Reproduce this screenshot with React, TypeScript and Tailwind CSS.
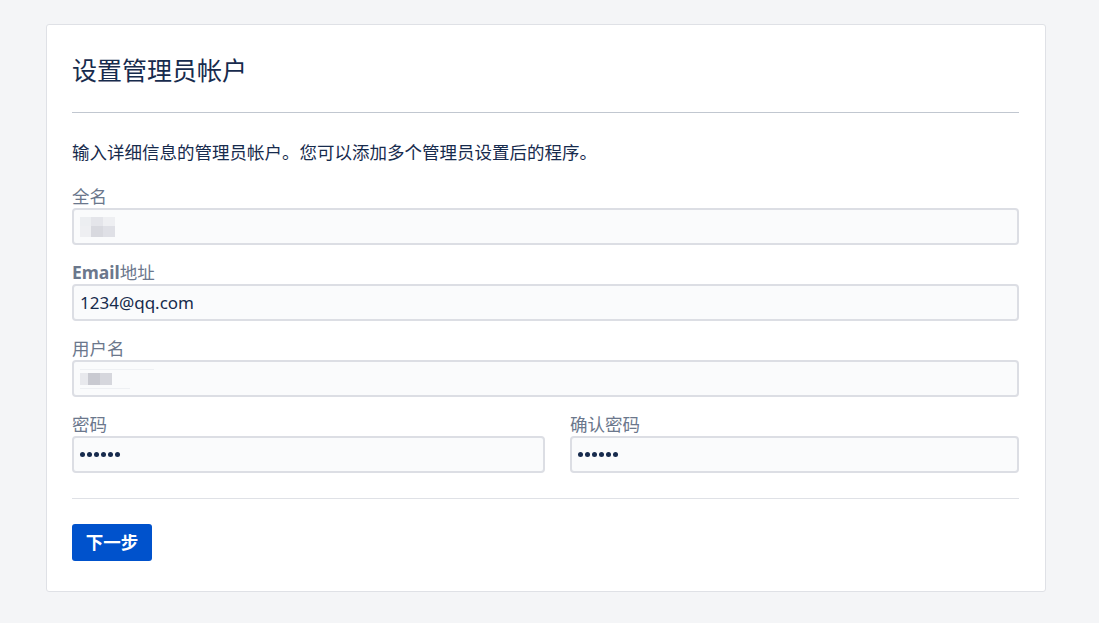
import React from "react";

const font = { fontFamily: '"Noto Sans", "Noto Sans CJK SC", sans-serif' };

function Label({ children }: { children: React.ReactNode }) {
  return <div className="h-[24px] leading-[24px] text-[17.5px] text-[#6b778c]">{children}</div>;
}

function Field({ children, className = "" }: { children?: React.ReactNode; className?: string }) {
  return (
    <div className={"h-[37px] rounded-[4px] border-[2.5px] border-[#dcdee4] bg-[#fafbfc] px-[6px] flex items-center text-[17px] text-[#172b4d] relative overflow-hidden " + className}>
      {children}
    </div>
  );
}

function Dots() {
  return (
    <div className="flex gap-[2px] items-center">
      {[0, 1, 2, 3, 4, 5].map((i) => (
        <span key={i} className="w-[5px] h-[5px] rounded-full bg-[#172b4d]" />
      ))}
    </div>
  );
}

export default function App() {
  return (
    <div className="min-h-[623px] w-full bg-[#f4f5f7] pt-[24px]" style={font}>
      <div className="ml-[46px] w-[1000px] bg-white border border-[#dfe1e6] rounded-[3px] pl-[25px] pr-[26px] pb-[30px]">
        <div className="h-[66px] pt-[24px] leading-[42px] text-[25px] text-[#172b4d]">设置管理员帐户</div>
        <div className="mt-[21px] h-px bg-[#c1c7d0]" />
        <div className="mt-[27px] h-[24px] leading-[24px] text-[17.5px] text-[#172b4d] whitespace-nowrap">
          输入详细信息的管理员帐户。您可以添加多个管理员设置后的程序。
        </div>
        <div className="mt-[20px]">
          <Label>全名</Label>
          <Field>
            <div className="flex flex-col">
              <div className="flex">
                <span className="w-[11px] h-[9px] bg-[#eceef1]" />
                <span className="w-[12px] h-[9px] bg-[#e4e5ea]" />
                <span className="w-[12px] h-[9px] bg-[#eeeff2]" />
              </div>
              <div className="flex">
                <span className="w-[11px] h-[11px] bg-[#eeeff2]" />
                <span className="w-[12px] h-[11px] bg-[#d8d9df]" />
                <span className="w-[12px] h-[11px] bg-[#dfe0e6]" />
              </div>
            </div>
          </Field>
        </div>
        <div className="mt-[15px]">
          <Label>
            <span className="font-bold">Email</span>地址
          </Label>
          <Field>1234@qq.com</Field>
        </div>
        <div className="mt-[15px]">
          <Label>用户名</Label>
          <Field>
            <div className="absolute left-[6px] top-[7px] w-[74px] h-px bg-[#eef0f3]" />
            <div className="absolute left-[6px] top-[26px] w-[50px] h-px bg-[#eef0f3]" />
            <div className="flex">
              <span className="w-[8px] h-[12px] bg-[#e8e9ed]" />
              <span className="w-[12px] h-[12px] bg-[#c9cad1]" />
              <span className="w-[12px] h-[12px] bg-[#d6d7dd]" />
            </div>
          </Field>
        </div>
        <div className="mt-[15px] flex gap-[25px]">
          <div className="w-[473px]">
            <Label>密码</Label>
            <Field>
              <Dots />
            </Field>
          </div>
          <div className="flex-1">
            <Label>确认密码</Label>
            <Field>
              <Dots />
            </Field>
          </div>
        </div>
        <div className="mt-[25px] h-px bg-[#dfe1e6]" />
        <button className="mt-[25px] w-[80px] h-[37px] rounded-[3px] bg-[#0052cc] text-white font-bold text-[17.5px] flex items-center justify-center">
          下一步
        </button>
      </div>
    </div>
  );
}
